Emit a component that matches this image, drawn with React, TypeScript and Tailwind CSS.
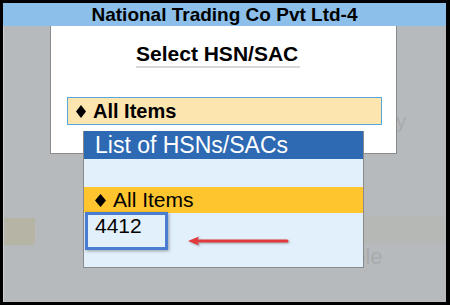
import React from "react";

const Diamond = ({ w, h }: { w: number; h: number }) => (
  <svg width={w} height={h} viewBox={`0 0 ${w} ${h}`} className="shrink-0">
    <polygon points={`${w / 2},0 ${w},${h / 2} ${w / 2},${h} 0,${h / 2}`} fill="#000" />
  </svg>
);

export default function App() {
  return (
    <div
      className="w-[450px] h-[305px] bg-black pt-[3px] pl-[3px] pr-[4px] pb-[3px] flex flex-col overflow-hidden"
      style={{ fontFamily: '"Liberation Sans", Arial, sans-serif' }}
    >
      <div className="h-[23px] bg-[#8cc0ea] flex items-center justify-center text-[19px] font-bold text-black leading-none">
        National Trading Co Pvt Ltd-4
      </div>
      <div className="flex-1 relative bg-[#b7babd] border-l border-[#cfd2d4]">
        {/* faint background content */}
        <div className="absolute left-0 top-[192px] w-[31px] h-[27px] bg-[#b6b4a5]" />
        <div className="absolute left-[359px] top-[191px] w-[83px] h-[26px] bg-[#b6b8b5]" />
        <div className="absolute left-[392px] top-[85px] text-[21px] leading-[20px] text-[#a8abae]">y</div>
        <div className="absolute left-[337px] top-[220px] text-[22px] leading-[22px] text-[#a8abae]">able</div>

        {/* dialog */}
        <div className="relative ml-[46px] w-[347px] h-[128px] bg-white border-x border-b border-[#8c8c8c] flex flex-col items-start">
          <div className="ml-[85px] mt-[16px] text-[21px] leading-[24px] font-bold text-black border-b-2 border-[#d8d8d8] pr-[2px]">
            Select HSN/SAC
          </div>
          <div className="ml-[16px] mt-[29px] w-[315px] h-[28px] bg-[#fde5b0] border border-[#56a8dc] flex items-center pl-[8px] gap-[7px] text-[20px] leading-[26px] font-bold text-black">
            <Diamond w={10} h={13} />
            <span>All Items</span>
          </div>
        </div>

        {/* dropdown list */}
        <div className="absolute left-[79px] top-[105px] w-[281px] h-[137px] bg-[#e2f0fb] border-x border-b border-[#8a8a8a] flex flex-col">
          <div className="h-[28px] bg-[#2e69b3] text-white text-[23px] leading-[28px] pl-[11px]">
            List of HSNs/SACs
          </div>
          <div className="h-[28px]" />
          <div className="h-[26px] bg-[#fec52e] flex items-center pl-[11px] gap-[7px] text-[21px] leading-[26px] text-black">
            <Diamond w={11} h={13} />
            <span>All Items</span>
          </div>
          <div className="h-[26px] pl-[11px] text-[21px] leading-[26px] text-black">4412</div>

          {/* annotation box */}
          <div className="absolute left-[1px] top-[81px] w-[83px] h-[38px] border-[3px] border-[#4a7cd1] shadow-[1px_1px_3px_rgba(0,0,0,0.35)]" />
          {/* red arrow */}
          <svg
            className="absolute left-[104px] top-[104px]"
            width="102"
            height="14"
            viewBox="0 0 102 14"
            style={{ filter: "drop-shadow(1px 1.5px 1px rgba(0,0,0,0.3))" }}
          >
            <line x1="8" y1="6" x2="99" y2="6" stroke="#e2393d" strokeWidth="3" strokeLinecap="round" />
            <polygon points="0,6 11,1.5 9,6 11,10.5" fill="#e2393d" />
          </svg>
        </div>
      </div>
    </div>
  );
}
